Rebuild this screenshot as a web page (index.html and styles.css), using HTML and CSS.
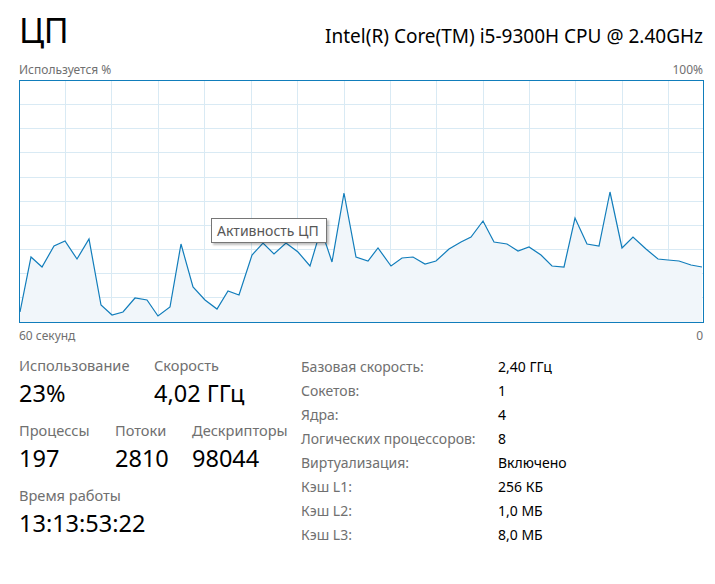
FILE: index.html
```html
<!DOCTYPE html>
<html lang="ru">
<head>
<meta charset="utf-8">
<title>ЦП</title>
<link rel="stylesheet" href="styles.css">
</head>
<body>
<div class="page">
  <header class="head">
    <h1 class="title">ЦП</h1>
    <div class="cpu">Intel(R) Core(TM) i5-9300H CPU @ 2.40GHz</div>
  </header>
  <div class="axis axis-top"><span>Используется %</span><span>100%</span></div>
  <div class="chart">
    <svg class="graph" width="685" height="243" viewBox="19 80 685 243" xmlns="http://www.w3.org/2000/svg">
      <g class="grid">
        <line x1="65.5" y1="80" x2="65.5" y2="323"/>
        <line x1="111.5" y1="80" x2="111.5" y2="323"/>
        <line x1="158.5" y1="80" x2="158.5" y2="323"/>
        <line x1="204.5" y1="80" x2="204.5" y2="323"/>
        <line x1="251.5" y1="80" x2="251.5" y2="323"/>
        <line x1="297.5" y1="80" x2="297.5" y2="323"/>
        <line x1="344.5" y1="80" x2="344.5" y2="323"/>
        <line x1="390.5" y1="80" x2="390.5" y2="323"/>
        <line x1="436.5" y1="80" x2="436.5" y2="323"/>
        <line x1="483.5" y1="80" x2="483.5" y2="323"/>
        <line x1="529.5" y1="80" x2="529.5" y2="323"/>
        <line x1="575.5" y1="80" x2="575.5" y2="323"/>
        <line x1="622.5" y1="80" x2="622.5" y2="323"/>
        <line x1="668.5" y1="80" x2="668.5" y2="323"/>
        <line x1="19" y1="104.5" x2="704" y2="104.5"/>
        <line x1="19" y1="128.5" x2="704" y2="128.5"/>
        <line x1="19" y1="152.5" x2="704" y2="152.5"/>
        <line x1="19" y1="177.5" x2="704" y2="177.5"/>
        <line x1="19" y1="201.5" x2="704" y2="201.5"/>
        <line x1="19" y1="225.5" x2="704" y2="225.5"/>
        <line x1="19" y1="249.5" x2="704" y2="249.5"/>
        <line x1="19" y1="273.5" x2="704" y2="273.5"/>
        <line x1="19" y1="297.5" x2="704" y2="297.5"/>
      </g>
      <polygon class="area" points="20,322 20,312 31,257 42,267 54,246 65,241 77,259 89,239 101,305 112,315 123,312 135,298 147,300 158,316 170,307 181,244 193,287 205,300 217,309 228,291 239,295 252,255 263,243 274,254 286,243 298,252 310,266 321,229 332,262 344,193 356,257 368,261 378,248 391,266 402,258 413,257 425,264 436,261 449,249 461,242 471,237 483,221 494,242 507,244 518,251 529,247 541,255 552,266 564,267 575,218 587,244 599,246 610,192 622,248 633,237 646,249 658,259 668,260 679,261 691,265 702,267 702,322"/>
      <polyline class="line" points="20,312 31,257 42,267 54,246 65,241 77,259 89,239 101,305 112,315 123,312 135,298 147,300 158,316 170,307 181,244 193,287 205,300 217,309 228,291 239,295 252,255 263,243 274,254 286,243 298,252 310,266 321,229 332,262 344,193 356,257 368,261 378,248 391,266 402,258 413,257 425,264 436,261 449,249 461,242 471,237 483,221 494,242 507,244 518,251 529,247 541,255 552,266 564,267 575,218 587,244 599,246 610,192 622,248 633,237 646,249 658,259 668,260 679,261 691,265 702,267"/>
      <rect class="frame" x="19.5" y="80.5" width="684" height="242"/>
    </svg>
    <div class="tooltip">Активность ЦП</div>
  </div>
  <div class="axis axis-bottom"><span>60 секунд</span><span>0</span></div>
  <section class="details">
    <div class="stats">
      <div class="stat-row">
        <div class="stat w-usage"><div class="stat-label">Использование</div><div class="stat-value">23%</div></div>
        <div class="stat"><div class="stat-label">Скорость</div><div class="stat-value">4,02 ГГц</div></div>
      </div>
      <div class="stat-row">
        <div class="stat w-proc"><div class="stat-label">Процессы</div><div class="stat-value">197</div></div>
        <div class="stat w-threads"><div class="stat-label">Потоки</div><div class="stat-value">2810</div></div>
        <div class="stat"><div class="stat-label">Дескрипторы</div><div class="stat-value">98044</div></div>
      </div>
      <div class="stat-row">
        <div class="stat"><div class="stat-label">Время работы</div><div class="stat-value">13:13:53:22</div></div>
      </div>
    </div>
    <dl class="specs">
      <dt>Базовая скорость:</dt><dd>2,40 ГГц</dd>
      <dt>Сокетов:</dt><dd>1</dd>
      <dt>Ядра:</dt><dd>4</dd>
      <dt>Логических процессоров:</dt><dd>8</dd>
      <dt>Виртуализация:</dt><dd>Включено</dd>
      <dt>Кэш L1:</dt><dd>256 КБ</dd>
      <dt>Кэш L2:</dt><dd>1,0 МБ</dd>
      <dt>Кэш L3:</dt><dd>8,0 МБ</dd>
    </dl>
  </section>
</div>
</body>
</html>
```

FILE: styles.css
```css
html, body {
  margin: 0;
  padding: 0;
  background: #ffffff;
}

body {
  font-family: "Noto Sans", "Open Sans", sans-serif;
  color: #000000;
}

.page {
  width: 715px;
  height: 584px;
  box-sizing: border-box;
  padding: 0 11px 0 19px;
  overflow: hidden;
}

.head {
  display: flex;
  justify-content: space-between;
  align-items: baseline;
  height: 60px;
}

.title {
  margin: 0;
  font-size: 34px;
  font-weight: 400;
  line-height: 60px;
  letter-spacing: -0.5px;
}

.cpu {
  font-size: 19px;
  line-height: 60px;
  margin-right: 1px;
}

.axis {
  display: flex;
  justify-content: space-between;
  font-size: 12px;
  color: #707070;
}

.axis-top {
  line-height: 16px;
  height: 16px;
  margin-top: 2px;
  margin-right: 1px;
}

.axis-bottom {
  line-height: 20px;
  margin-top: 3px;
  margin-right: 1px;
}

.chart {
  position: relative;
  width: 685px;
  height: 243px;
  margin-top: 2px;
}

.graph {
  display: block;
}

.grid line {
  stroke: #d9eaf4;
  stroke-width: 1;
}

.area {
  fill: #f1f6fa;
  stroke: none;
}

.line {
  fill: none;
  stroke: #117dbb;
  stroke-width: 1.2;
  stroke-linejoin: miter;
}

.frame {
  fill: none;
  stroke: #117dbb;
  stroke-width: 1;
}

.tooltip {
  position: absolute;
  left: 192px;
  top: 138px;
  height: 25px;
  box-sizing: border-box;
  padding: 0 7px 0 5px;
  background: #ffffff;
  border: 1px solid #767676;
  box-shadow: 2px 2px 2px rgba(0, 0, 0, 0.25);
  font-size: 14px;
  line-height: 23px;
  color: #575757;
  white-space: nowrap;
}

.details {
  display: flex;
  margin-top: 9px;
}

.stats {
  width: 282px;
  display: flex;
  flex-direction: column;
  gap: 11px;
}

.stat-row {
  display: flex;
}

.w-usage { width: 135px; }
.w-proc { width: 96px; }
.w-threads { width: 77px; }

.stat-label {
  font-size: 14.6px;
  line-height: 20px;
  color: #707070;
}

.stat-value {
  font-size: 23.5px;
  line-height: 32px;
  margin-top: 2px;
}

.specs {
  margin: 0;
  display: grid;
  grid-template-columns: 197px auto;
  font-size: 14px;
  line-height: 24px;
}

.specs dt {
  color: #707070;
}

.specs dd {
  margin: 0;
  color: #000000;
}
```
